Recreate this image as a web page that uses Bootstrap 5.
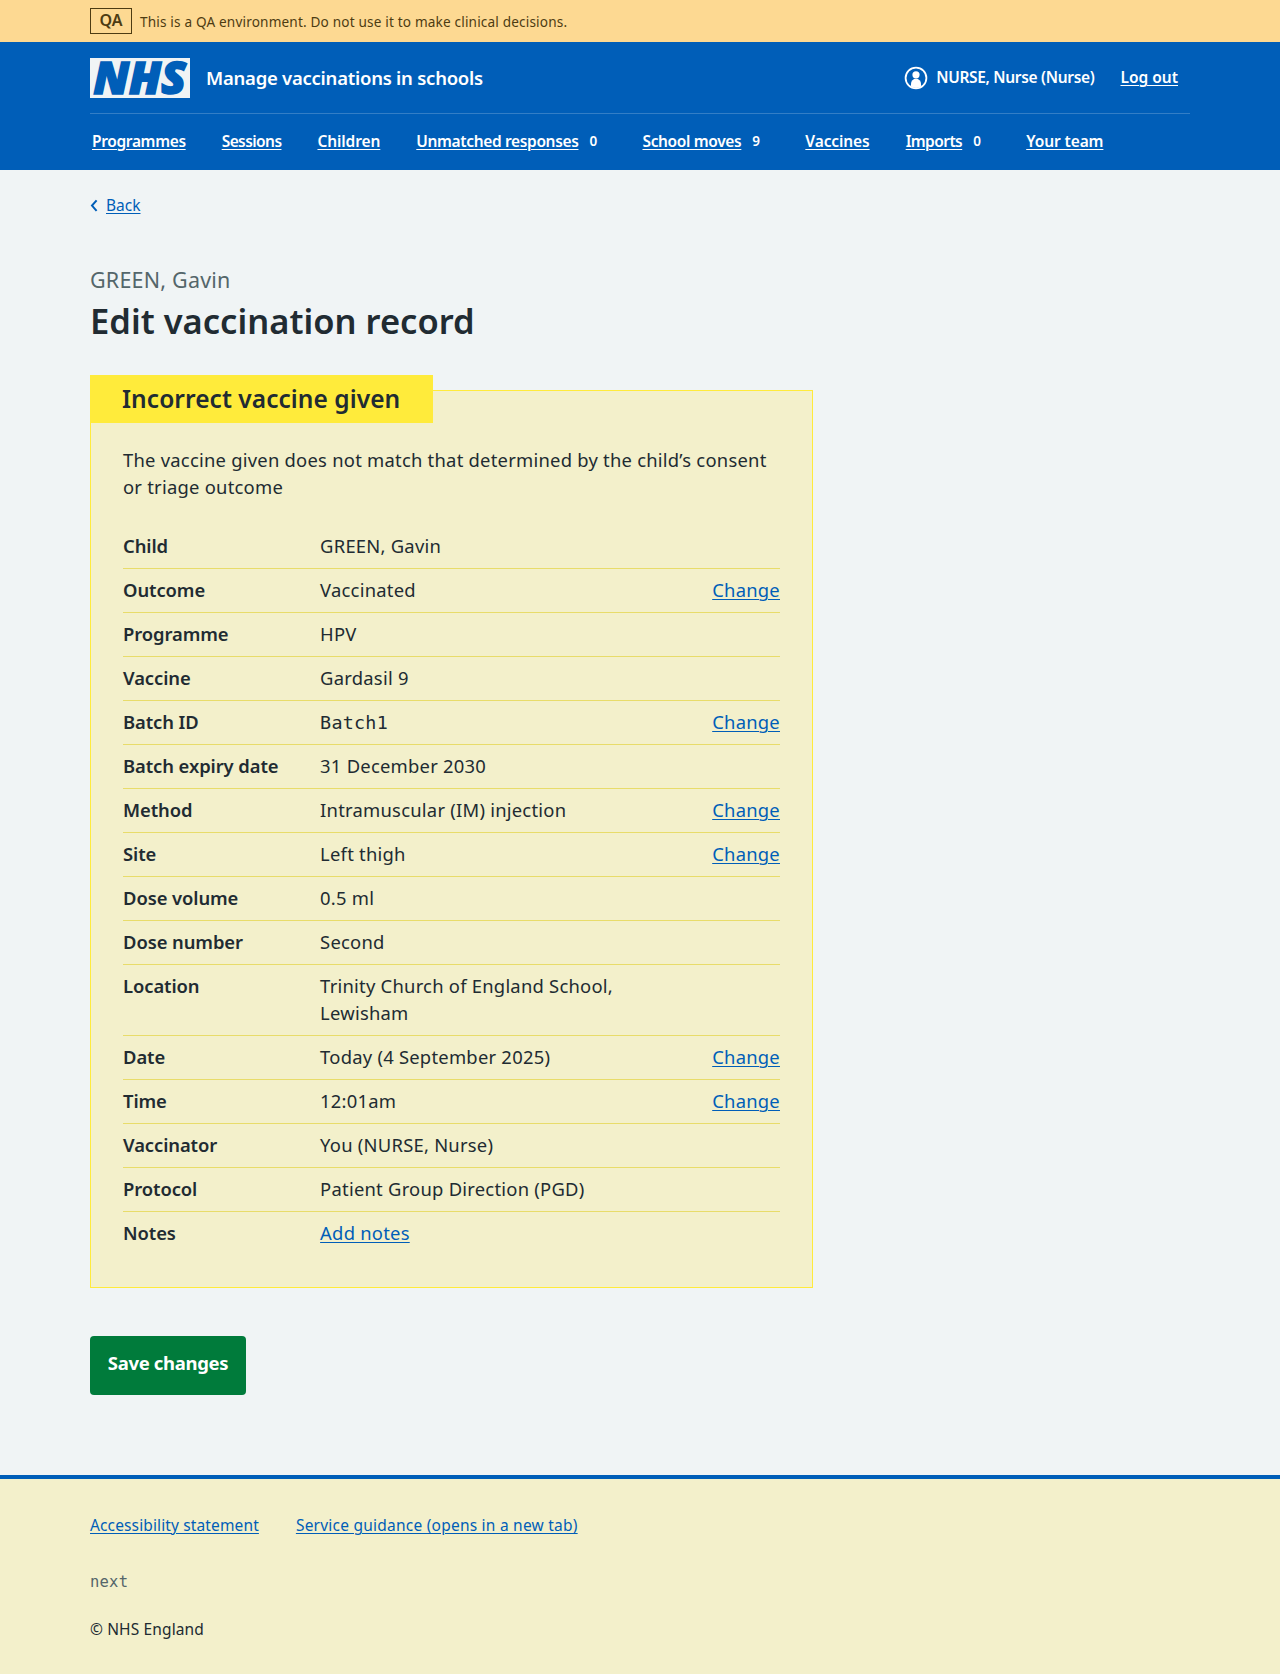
<!DOCTYPE html>
<html lang="en">
<head>
<meta charset="utf-8">
<meta name="viewport" content="width=device-width, initial-scale=1">
<title>Edit vaccination record – Manage vaccinations in schools</title>
<link href="https://cdn.jsdelivr.net/npm/bootstrap@5.3.0/dist/css/bootstrap.min.css" rel="stylesheet">
<style>
:root{--nhs-blue:#005eb8;--nhs-text:#212b32;--nhs-grey:#f0f4f5;--nhs-pale:#f3f0cb;--nhs-yellow:#ffeb3b}
body{font-family:"Noto Sans","Open Sans",sans-serif;color:var(--nhs-text);background:var(--nhs-grey);font-size:18.4px;line-height:27px;letter-spacing:.24px}
a{color:var(--nhs-blue);text-underline-offset:2px;text-decoration-thickness:1px}
.page-width{width:1100px;margin:0 auto}
.env-banner{height:42px;background:#fdd992;color:#4d3c12;font-size:13.6px;letter-spacing:.17px}
.env-tag{border:1px solid #4d3c12;width:42px;height:26px;line-height:23px;font-weight:600;font-size:16px;text-align:center;letter-spacing:0}
.site-header{background:var(--nhs-blue);color:#fff;height:128px}
.site-header a{color:#fff}
.site-top{height:72px;border-bottom:1px solid #337ec6}
.nhs-logo{overflow:visible}
.site-name{font-size:18.5px;font-weight:600;letter-spacing:-.25px;padding-bottom:1px}
.account{font-size:15.5px;font-weight:600;letter-spacing:-.32px;padding-right:12px}
.log-out{margin-left:26px;letter-spacing:0}
.site-nav{font-size:15.5px;font-weight:600;letter-spacing:-.35px;gap:36px;padding:0 0 2px 2px;height:56px}
.nav-tight{letter-spacing:-.57px}
.nav-loose{letter-spacing:-.1px}
.nav-count{font-size:13.5px;width:28px;padding-left:11px}
.back-link{font-size:15.5px;line-height:24px;letter-spacing:0;padding-top:23px;margin-bottom:47px}
.page-caption{font-size:21.5px;letter-spacing:.2px;line-height:32px;color:#54666a}
.page-title{font-size:34.5px;line-height:44px;font-weight:600;letter-spacing:.02px;margin-top:3px}
.warn-panel{width:723px;border:1px solid var(--nhs-yellow);background:var(--nhs-pale);padding:0 32px 32px;margin:47px 0 48px}
.warn-label{width:343px;height:48px;margin:-16px 0 23px -33px;padding-left:32px;background:var(--nhs-yellow);font-size:24.5px;line-height:47px;font-weight:600;letter-spacing:.05px}
.warn-text{margin-bottom:25px}
.sum-row{padding:7px 0 9px;border-bottom:1px solid #e8dc6a}
.sum-row:last-child{border-bottom:0}
.sum-key{width:30%;font-weight:600;letter-spacing:-.08px}
.sum-val{width:50%}
.sum-act{width:20%;text-align:right}
.mono{font-family:"DejaVu Sans Mono",monospace}
.batch-code{line-height:1}
.save-btn{display:block;width:156px;height:59px;padding:0 0 5px;margin-bottom:80px;border:0;border-radius:4px;background:#007b3b;color:#fff;font-size:18.5px;font-weight:700;letter-spacing:-.33px}
.save-btn:hover{background:#00662f;color:#fff}
.site-footer{height:199px;border-top:4px solid var(--nhs-blue);background:var(--nhs-pale);font-size:15.5px;line-height:24px;letter-spacing:.23px}
.foot-links{padding-top:34px;gap:37px;margin-bottom:33px}
.foot-stmt{letter-spacing:.13px}
.foot-version{color:#54666a;margin-bottom:23px}
.foot-copy{letter-spacing:.13px}
</style>
</head>
<body>
<div class="env-banner">
  <div class="page-width d-flex align-items-center h-100">
    <span class="env-tag me-2">QA</span><span>This is a QA environment. Do not use it to make clinical decisions.</span>
  </div>
</div>
<header class="site-header">
  <div class="page-width">
    <div class="site-top d-flex align-items-center">
      <svg class="me-3 nhs-logo" width="100" height="40" viewBox="0 0 100 40" role="img" aria-label="NHS"><rect width="100" height="40" fill="#f0f4f5"/><text x="3.5" y="35.8" font-family="Open Sans,Noto Sans,sans-serif" font-weight="800" font-style="italic" font-size="44" fill="#005eb8" stroke="#005eb8" stroke-width="1.7" textLength="92.5" lengthAdjust="spacingAndGlyphs" letter-spacing="0">NHS</text></svg>
      <span class="site-name">Manage vaccinations in schools</span>
      <div class="account ms-auto d-flex align-items-center">
        <svg class="me-2" width="24" height="26" viewBox="0 0 24 26"><circle cx="12" cy="13" r="10.4" fill="none" stroke="#fff" stroke-width="1.8"/><circle cx="12" cy="9.8" r="3.6" fill="#fff"/><path d="M7 21.5v-2.7a5 5 0 0 1 10 0v2.7a10 10 0 0 1-10 0z" fill="#fff"/></svg>
        <span>NURSE, Nurse (Nurse)</span><a class="log-out" href="#">Log out</a>
      </div>
    </div>
    <nav class="site-nav d-flex align-items-center">
      <a href="#">Programmes</a><a class="nav-tight" href="#">Sessions</a><a class="nav-loose" href="#">Children</a>
      <span class="d-flex"><a href="#">Unmatched responses</a><span class="nav-count">0</span></span>
      <span class="d-flex"><a href="#">School moves</a><span class="nav-count">9</span></span>
      <a class="nav-loose" href="#">Vaccines</a>
      <span class="d-flex"><a class="nav-tight" href="#">Imports</a><span class="nav-count">0</span></span>
      <a class="nav-loose" href="#">Your team</a>
    </nav>
  </div>
</header>
<main class="page-width">
  <div class="back-link d-flex align-items-center">
    <svg class="me-2" width="8" height="14" viewBox="0 0 8 14"><path d="M6.6 2.4 2 7.6l4.6 5.2" fill="none" stroke="#005eb8" stroke-width="2"/></svg><a href="#">Back</a>
  </div>
  <div class="page-caption">GREEN, Gavin</div>
  <h1 class="page-title mb-0">Edit vaccination record</h1>
  <section class="warn-panel">
    <h2 class="warn-label">Incorrect vaccine given</h2>
    <p class="warn-text">The vaccine given does not match that determined by the child’s consent<br>or triage outcome</p>
    <dl class="mb-0">
      <div class="sum-row d-flex"><dt class="sum-key">Child</dt><dd class="sum-val mb-0">GREEN, Gavin</dd></div>
      <div class="sum-row d-flex"><dt class="sum-key">Outcome</dt><dd class="sum-val mb-0">Vaccinated</dd><dd class="sum-act mb-0"><a href="#">Change</a></dd></div>
      <div class="sum-row d-flex"><dt class="sum-key">Programme</dt><dd class="sum-val mb-0">HPV</dd></div>
      <div class="sum-row d-flex"><dt class="sum-key">Vaccine</dt><dd class="sum-val mb-0">Gardasil 9</dd></div>
      <div class="sum-row d-flex"><dt class="sum-key">Batch ID</dt><dd class="sum-val mb-0"><span class="mono batch-code">Batch1</span></dd><dd class="sum-act mb-0"><a href="#">Change</a></dd></div>
      <div class="sum-row d-flex"><dt class="sum-key">Batch expiry date</dt><dd class="sum-val mb-0">31 December 2030</dd></div>
      <div class="sum-row d-flex"><dt class="sum-key">Method</dt><dd class="sum-val mb-0">Intramuscular (IM) injection</dd><dd class="sum-act mb-0"><a href="#">Change</a></dd></div>
      <div class="sum-row d-flex"><dt class="sum-key">Site</dt><dd class="sum-val mb-0">Left thigh</dd><dd class="sum-act mb-0"><a href="#">Change</a></dd></div>
      <div class="sum-row d-flex"><dt class="sum-key">Dose volume</dt><dd class="sum-val mb-0">0.5 ml</dd></div>
      <div class="sum-row d-flex"><dt class="sum-key">Dose number</dt><dd class="sum-val mb-0">Second</dd></div>
      <div class="sum-row d-flex"><dt class="sum-key">Location</dt><dd class="sum-val mb-0">Trinity Church of England School,<br>Lewisham</dd></div>
      <div class="sum-row d-flex"><dt class="sum-key">Date</dt><dd class="sum-val mb-0">Today (4 September 2025)</dd><dd class="sum-act mb-0"><a href="#">Change</a></dd></div>
      <div class="sum-row d-flex"><dt class="sum-key">Time</dt><dd class="sum-val mb-0">12:01am</dd><dd class="sum-act mb-0"><a href="#">Change</a></dd></div>
      <div class="sum-row d-flex"><dt class="sum-key">Vaccinator</dt><dd class="sum-val mb-0">You (NURSE, Nurse)</dd></div>
      <div class="sum-row d-flex"><dt class="sum-key">Protocol</dt><dd class="sum-val mb-0">Patient Group Direction (PGD)</dd></div>
      <div class="sum-row d-flex"><dt class="sum-key">Notes</dt><dd class="sum-val mb-0"><a href="#">Add notes</a></dd></div>
    </dl>
  </section>
  <button class="btn save-btn" type="button">Save changes</button>
</main>
<footer class="site-footer">
  <div class="page-width">
    <div class="foot-links d-flex"><a class="foot-stmt" href="#">Accessibility statement</a><a href="#">Service guidance (opens in a new tab)</a></div>
    <div class="mono foot-version">next</div>
    <div class="foot-copy">© NHS England</div>
  </div>
</footer>
<script src="https://cdn.jsdelivr.net/npm/bootstrap@5.3.0/dist/js/bootstrap.bundle.min.js"></script>
</body>
</html>
